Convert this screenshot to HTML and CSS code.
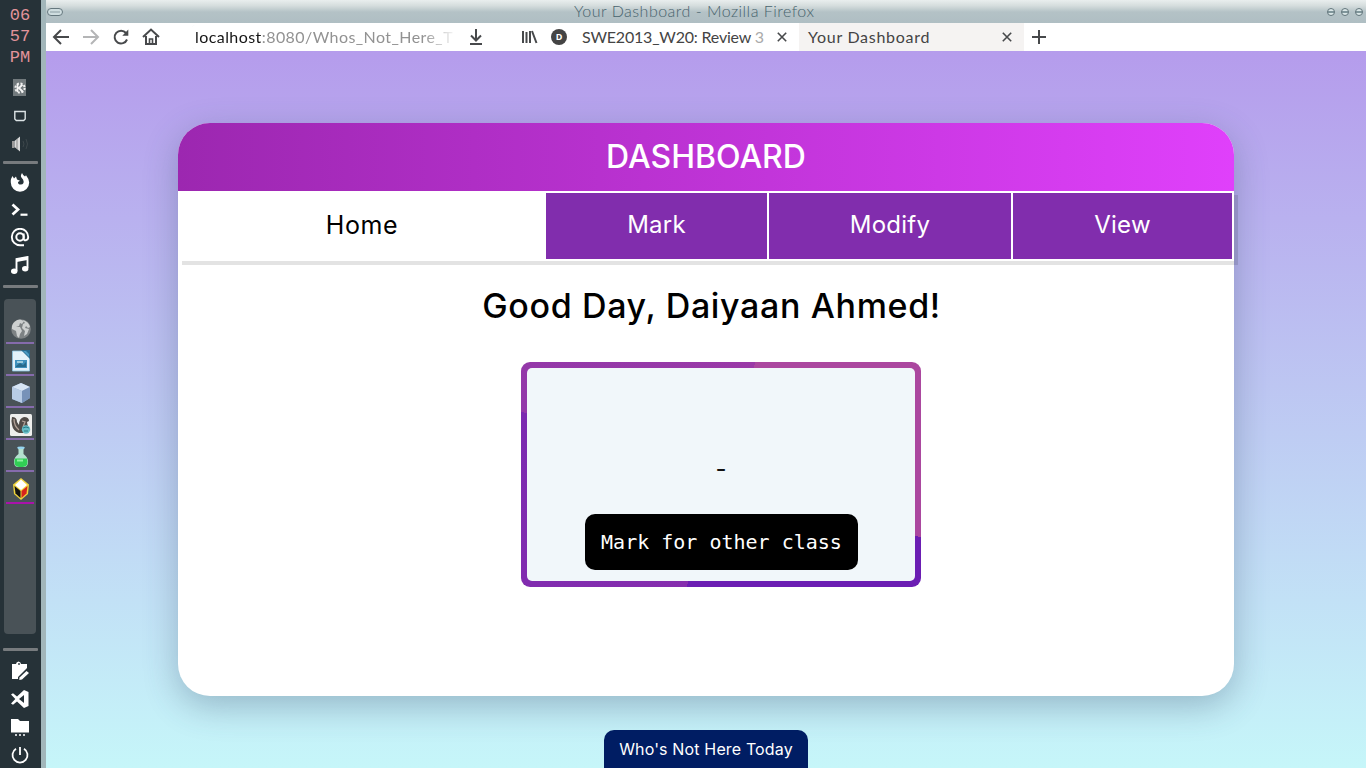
FILE: index.html
```html
<!DOCTYPE html>
<html lang="en">
<head>
<meta charset="utf-8">
<title>Your Dashboard</title>
<link rel="stylesheet" href="styles.css">
</head>
<body>
<div class="desktop">
<aside class="dock">
  <div class="clock"><span>06</span><span>57</span><span>PM</span></div>
  <div class="tray">
    <svg width="16" height="20" viewBox="0 0 16 20"><rect x="1" y="1" width="13" height="17" fill="#727a7d"/><circle cx="8" cy="10" r="4.6" fill="none" stroke="#eee" stroke-width="2" stroke-dasharray="2 1.6"/><path d="M5.500 6v8M10.500 6.500L7 10l4 4" stroke="#f4f4f4" stroke-width="1.800" fill="none"/></svg>
    <svg width="14" height="14" viewBox="0 0 14 14"><path d="M1.800 2.500h10.400v7.500l-1.500 1.500H3.300L1.800 10z" fill="none" stroke="#dce4e6" stroke-width="1.400"/></svg>
    <svg width="18" height="18" viewBox="0 0 18 18"><path d="M1 6h2.500v7H1z" fill="#999"/><path d="M3.500 6L9 1.500v15L3.500 12z" fill="#d9dada"/><path d="M6 4v10" stroke="#888"/><path d="M12 6q2 3 0 6M15 4q3 5 0 10" stroke="#3d474b" fill="none"/></svg>
  </div>
  <div class="rule"></div>
  <div class="launch">
    <svg width="20" height="20" viewBox="0 0 20 20"><path d="M1 7L2.500 4l1.500 2.500L6 4.500l1 3 3 1.200-2 1.300q0 2.800 3 2.600 3-.4 2.600-3.300-.2-2-2-3.600Q10 4 12 1q1 2.500 3 3.500l1-1.200q3.200 4 3.200 7.200a9.200 9.200 0 0 1-18.400 0Q.6 8.500 1 7z" fill="#fff"/></svg>
    <svg width="20" height="16" viewBox="0 0 20 16"><path d="M2.500 2.500L8 7.500l-5.500 5" stroke="#fff" stroke-width="2.700" fill="none"/><path d="M10.500 12.700h7" stroke="#fff" stroke-width="2.200"/></svg>
    <svg width="20" height="20" viewBox="0 0 20 20"><circle cx="10" cy="9" r="3.700" fill="none" stroke="#fff" stroke-width="2"/><path d="M13.700 5.500v4.700q0 2.500 2.400 2 2.100-.5 2.100-3.200a8.200 8.200 0 1 0-8.200 8.200h4" fill="none" stroke="#fff" stroke-width="1.900"/></svg>
    <svg width="20" height="20" viewBox="0 0 20 20"><path d="M6.500 15V3L17.500 1v11" fill="none" stroke="#fff" stroke-width="1.900"/><path d="M6.500 2.800L17.500 .8V4L6.500 6z" fill="#fff"/><ellipse cx="4.200" cy="15.300" rx="3.200" ry="2.700" fill="#fff"/><ellipse cx="15.200" cy="12.700" rx="3.200" ry="2.700" fill="#fff"/></svg>
  </div>
  <div class="rule"></div>
  <div class="tasks">
    <div class="task"><svg width="22" height="22" viewBox="0 0 22 22"><circle cx="11" cy="11" r="9.800" fill="#7d8284"/><path d="M2 8q2-6 8-6.500l4 1.500-2 3-2-1-1 3-3 1h4l2 4-2 3-1 4-2-2-1-5-4-2zM13 2q6 2 7 7l-2 1-2-2-1 2 4 1-2 5-3 2 1-5-3-3 1-4 2-1z" fill="#cdd0d0"/></svg></div>
    <div class="task"><svg width="20" height="22" viewBox="0 0 20 22"><path d="M1.500 1H13l5.500 5v15h-17z" fill="#e3f2fa" stroke="#8bc6e4" stroke-width=".8"/><path d="M10 0h9v9z" fill="#27698d"/><path d="M12 1l6 6v-3l-3-3z" fill="#4999c2"/><rect x="4" y="10" width="12" height="8" fill="#3e91bc"/><path d="M5 16l4-3 3 2 3-3v5H5z" fill="#286b8b"/><rect x="6" y="11" width="6" height="2" fill="#9cccdc"/></svg></div>
    <div class="task"><svg width="20" height="22" viewBox="0 0 20 22"><path d="M10 1l9 4v11l-8 5-10-4V5z" fill="#8da7cb"/><path d="M1 5l9-4 9 4-8 4z" fill="#d7e5f5"/><path d="M1 5l10 4v12L1 17z" fill="#b8cce5"/><path d="M11 9l8-4v11l-8 5z" fill="#7792b8"/></svg></div>
    <div class="task"><svg width="22" height="22" viewBox="0 0 22 22"><rect width="22" height="22" rx="1.500" fill="#edeeed"/><path d="M2 3q5 0 5 5l2 3q0-7 5-8 5 0 5 4l-2 1 1 5-4 6H9Q3 17 2 11q-1-5 0-8z" fill="#514b47"/><path d="M4 5q0 7 5 11M12 7l3 1-2 5" stroke="#b1a096" stroke-width="1.300" fill="none"/><circle cx="16" cy="15.500" r="4.200" fill="#67bdc7"/><path d="M13 14q3-2 6 0M14 17h4" stroke="#267b86" fill="none"/></svg></div>
    <div class="task"><svg width="16" height="22" viewBox="0 0 16 22"><path d="M5 1.500h6L10.500 4v4q4.500 3 4.500 8 0 5-4 5H5q-4 0-4-5 0-5 4.500-8V4z" fill="#b4e0cf"/><path d="M2 12.500h12q2 8-4 8.500H6Q0 20.500 2 12.500z" fill="#31ce55"/><path d="M4 14.500h6" stroke="#8df39e" stroke-width="2"/><ellipse cx="8" cy="1.800" rx="3.800" ry="1.300" fill="#95d3ef"/></svg></div>
    <div class="task current"><svg width="18" height="24" viewBox="0 0 18 24"><path d="M9 1l8 6.500-1 9.500-7 6L2 17 1 7.500z" fill="#f0d43d"/><path d="M9 2.500l6 5.500-6 5-6-5z" fill="#fff"/><path d="M2.500 9L8.500 14v7l-5-4.500z" fill="#131313"/><path d="M15.500 9L9.500 14v7l5-4.500z" fill="#d7231c"/></svg></div>
  </div>
  <div class="rule"></div>
  <div class="launch tools">
    <svg width="22" height="22" viewBox="0 0 22 22"><path d="M3 4h4q0-2 2.500-2.500Q12 2 12 4h6v4l-9 9v2H3z" fill="#fff"/><circle cx="10" cy="4" r=".9" fill="#263238"/><path d="M10.500 17.500l7-6.500 2.500 2-7 6.500-2.700.4z" fill="#fff"/></svg>
    <svg width="20" height="20" viewBox="0 0 20 20"><path d="M14 1l4.500 2v14L14 19 7 12.500 3 15.700 1 14.500 5.300 10 1 5.500l2-1.200L7 7.500zM14 6l-5 4 5 4z" fill="#fff" fill-rule="evenodd"/></svg>
    <svg width="20" height="22" viewBox="0 0 20 22"><path d="M1 3h7l2 2h9v11.500H1z" fill="#fff"/><path d="M5 19h2M9 19h2M13 19h2" stroke="#fff" stroke-width="1.700"/></svg>
    <svg width="20" height="20" viewBox="0 0 20 20"><path d="M6 3.700a7.500 7.500 0 1 0 8 0M10 2v8" stroke="#fff" stroke-width="1.800" fill="none"/></svg>
  </div>
</aside>
<section class="window">
  <div class="titlebar">
    <svg class="menu-knob" width="18" height="10" viewBox="0 0 18 10"><rect x="1.500" y="1.500" width="15" height="7" rx="3.500" fill="#cfdde0" stroke="#65777e"/><path d="M4 5h10" stroke="#8b9da3"/></svg>
    <span class="window-title">Your Dashboard - Mozilla Firefox</span>
    <span class="knobs"><i></i><i></i><i></i></span>
  </div>
  <div class="toolbar">
    <svg width="18" height="18" viewBox="0 0 18 18"><path d="M17 9H2M9 2L2 9l7 7" class="ink"/></svg>
    <svg class="forward" width="18" height="18" viewBox="0 0 18 18"><path d="M1 9h15M9 2l7 7-7 7" class="ink faded"/></svg>
    <svg class="reload" width="18" height="18" viewBox="0 0 18 18"><path d="M15 11.500A6.400 6.400 0 1 1 14 5" class="ink"/><path d="M16.300 1.500v6.300h-6z" fill="#47494b"/></svg>
    <svg class="house" width="18" height="18" viewBox="0 0 18 18"><path d="M1 9l8-7.500L17 9M4 8v8h10V8" class="ink"/><path d="M7.500 16v-5h3v5" class="ink thin"/></svg>
    <div class="address"><b>localhost</b><span>:8080/Whos_Not_Here_T</span></div>
    <svg class="download" width="16" height="18" viewBox="0 0 16 18"><path d="M8 1v11M3 7.500l5 5 5-5M2 16h12" class="ink"/></svg>
    <svg class="library" width="17" height="16" viewBox="0 0 17 16"><path d="M2 2v12M5.500 3v11M9 2v12M11 2l4.500 12" class="ink"/></svg>
    <span class="favicon">D</span>
    <div class="tab review"><span class="tab-text">SWE2013_W20: Review</span> <span class="tab-fade">3</span></div>
    <svg class="close" width="12" height="12" viewBox="0 0 12 12"><path d="M1.800 1.800l8.400 8.400M10.200 1.800l-8.400 8.400" class="ink thin"/></svg>
    <div class="tab active"><span class="tab-text">Your Dashboard</span><svg width="12" height="12" viewBox="0 0 12 12"><path d="M1.800 1.800l8.400 8.400M10.200 1.800l-8.400 8.400" class="ink thin"/></svg></div>
    <svg class="plus" width="14" height="14" viewBox="0 0 14 14"><path d="M7 0v14M0 7h14" class="ink"/></svg>
  </div>
  <main class="page">
    <div class="card">
      <h1 class="heading"><span>DASHBOARD</span></h1>
      <nav class="nav">
        <a class="nav-item home"><span>Home</span></a><a class="nav-item mark"><span>Mark</span></a><a class="nav-item modify"><span>Modify</span></a><a class="nav-item view"><span>View</span></a>
      </nav>
      <h2 class="greeting"><span>Good Day, Daiyaan Ahmed!</span></h2>
      <div class="class-box"><div class="class-inner"><span class="dash">-</span><button class="mark-button">Mark for other class</button></div></div>
    </div>
    <footer class="brand"><span>Who's Not Here Today</span></footer>
  </main>
</section>
</div>
</body>
</html>
```
FILE: styles.css
```css
* { box-sizing: border-box; }
body { margin: 0; overflow: hidden; font-family: Inter, "Noto Sans", sans-serif; }
svg { display: block; flex: none; }
.desktop { display: flex; width: 1366px; height: 768px; overflow: hidden; background: #263238; }

.dock { width: 41px; flex: none; display: flex; flex-direction: column; background: #263238; height: 768px; overflow: hidden; }
.clock { margin-top: 5px; height: 69px; flex: none; display: flex; flex-direction: column; align-items: center; font: 17px/21px "Liberation Mono", monospace; color: #e3949b; padding-right: 1px; }
.tray, .launch { display: grid; grid-auto-rows: 28px; place-items: center; padding-right: 2px; flex: none; }
.tray { padding-right: 1px; height: 87px; }
.rule { width: 35px; height: 3px; margin-left: 3px; background: #777b7e; border-radius: 1px; flex: none; }
.launch { height: 121px; padding-top: 4px; }
.tasks { flex: none; width: 32px; height: 335px; margin: 11px 0 14px 4px; background: #495257; border-radius: 4px; padding-top: 13px; }
.task { height: 32px; display: grid; place-items: center; border-bottom: 2px solid #856bac; margin: 0 2px; width: 28px; padding: 4px 0 0 2px; }
.task.current { border-color: #a912ab; }
.launch.tools { padding-top: 6px; height: 118px; }

.window { width: 1325px; flex: none; border-left: 5px solid #a2b6ba; background: #fff; }
.titlebar { height: 23px; display: grid; grid-template-columns: 528px 1fr auto; align-items: center; background: linear-gradient(#e9eeee 0, #d5dddd 25%, #b4c2c6 52%, #afbec3 100%); padding-top: 1px; }
.window-title { font: 300 16px/20px Lato, sans-serif; letter-spacing: .49px; color: #48636d; white-space: nowrap; margin-top: -2px; }
.knobs { display: flex; gap: 6px; padding-right: 3px; }
.knobs i { width: 8px; height: 8px; border: 1px solid #62757b; border-radius: 50%; background: linear-gradient(#dbe7e8 40%, #80969b 40% 60%, #dbe7e8 60%); }

.toolbar { height: 28px; display: flex; align-items: center; padding-left: 6px; background: #fff; font: 16px/28px Lato, sans-serif; color: #444; white-space: nowrap; }
.ink { fill: none; stroke: #47494b; stroke-width: 2; }
.ink.thin { stroke-width: 1.6; }
.ink.faded { stroke: #b4b5b6; }
.forward { margin-left: 12px; }
.reload { margin-left: 12px; }
.house { margin-left: 12px; }
.address { margin-left: 32px; width: 265px; height: 24px; padding-left: 3px; line-height: 24px; border-radius: 3px; box-shadow: 0 0 3px #e5e5e5; color: #929292; overflow: hidden; letter-spacing: .43px; -webkit-mask-image: linear-gradient(90deg, #000 87%, transparent); }
.address b { font-weight: 400; color: #151515; }
.download { margin-left: 11px; }
.library { margin-left: 37px; }
.favicon { width: 16px; height: 16px; margin-left: 13px; border-radius: 50%; background: #444; color: #fff; font: 700 9px/16px "Open Sans", sans-serif; text-align: center; flex: none; }
.review { width: 183px; margin-left: 15px; flex: none; letter-spacing: -.2px; }
.tab-fade { color: #aaa; }
.close { margin-left: 11px; }
.active { width: 225px; height: 28px; margin-left: 11px; padding: 0 11px 0 9px; display: flex; align-items: center; justify-content: space-between; background: #f5f3f2; flex: none; letter-spacing: .72px; }
.plus { margin-left: 8px; }

.page { height: 717px; display: flex; flex-direction: column; align-items: center; padding-top: 72px; background: linear-gradient(#b59cec, #c6f6f9); }
.card { width: 1056px; height: 573px; flex: none; border-radius: 32px; background: #fff; box-shadow: 0 10px 34px rgba(50, 70, 100, .32); }
.heading { margin: 0; height: 68px; display: grid; place-items: center; border-radius: 32px 32px 0 0; background: linear-gradient(90deg, #9c27b0, #e040fb); color: #fff; font-size: 32px; line-height: 66px; font-weight: 500; }
.nav { display: grid; grid-template-columns: 366px 221px 242px 219px; column-gap: 2px; height: 70px; border: 2px solid #fff; border-left: 0; background: #fff; box-shadow: 4px 4px 0 rgba(0, 0, 0, .11); }
.nav-item { display: grid; place-items: center; height: 66px; background: #812dad; color: #fff; font-size: 24px; line-height: 62px; padding-bottom: 2px; letter-spacing: .25px; }
.nav-item.home { background: #fff; color: #000; font-size: 25px; letter-spacing: .6px; padding-left: 2px; }
.greeting { margin: 21px 0 0 11px; height: 48px; display: grid; place-items: center; color: #000; font-size: 34px; line-height: 48px; font-weight: 500; letter-spacing: .65px; }
.class-box { width: 400px; height: 225px; margin: 32px 0 0 343px; padding: 6px; border-radius: 9px; background: conic-gradient(from 17deg, #ab479f 0 90.5deg, #6b1eb3 90.5deg 180deg, #862eae 180deg, #7b2ab0 270.5deg, #9338a9 270.5deg, #9a39a7 360deg); }
.class-inner { height: 213px; display: flex; flex-direction: column; align-items: center; border-radius: 5px; background: #f1f7fa; }
.dash { margin-top: 88px; height: 58px; font: 24px/26px Inter, sans-serif; color: #111; }
.mark-button { width: 273px; height: 56px; flex: none; border: 0; border-radius: 10px; background: #000; color: #fff; font: 20px/56px "DejaVu Sans Mono", monospace; padding: 0; margin-left: 1px; white-space: nowrap; }
.brand { width: 204px; height: 38px; margin-top: 34px; flex: none; border-radius: 10px 10px 0 0; background: #001d63; color: #fff; text-align: center; font-size: 16px; line-height: 38px; letter-spacing: .15px; white-space: nowrap; }
```
